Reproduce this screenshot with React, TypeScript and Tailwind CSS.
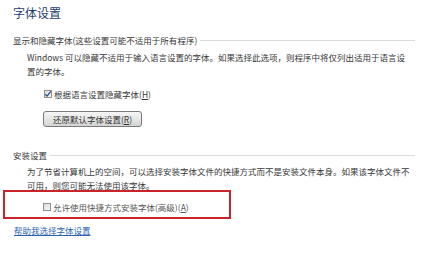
import type { ReactNode } from 'react'

const font = "font-['Noto_Sans_CJK_SC','Noto_Sans',sans-serif]"

export default function App() {
  return (
    <div className={`relative h-[255px] w-[436px] overflow-hidden bg-white pl-[13px] pt-[6px] text-[8.5px] text-[#383838] ${font}`}>
      <h1 className="text-[12px] leading-[14px] font-normal text-[#1e3c6e]">字体设置</h1>

      <SectionHeader className="mt-[14px]">显示和隐藏字体(这些设置可能不适用于所有程序)</SectionHeader>

      <p className="mt-[4px] ml-[14px] leading-[14px] whitespace-nowrap">
        Windows 可以隐藏不适用于输入语言设置的字体。如果选择此选项，则程序中将仅列出适用于语言设
        <br />
        置的字体。
      </p>

      <label className="mt-[10px] ml-[31px] flex h-[12px] items-center gap-[2px]">
        <Checkbox checked />
        <span>根据语言设置隐藏字体(<u>H</u>)</span>
      </label>

      <button className="mt-[11px] ml-[30px] flex h-[16px] w-[99px] items-center justify-center rounded-[3px] border border-[#7a7a7a] bg-gradient-to-b from-[#f6f6f6] via-[#e6e6e6] to-[#d4d4d4] leading-none text-[#333]">
        还原默认字体设置(<u>R</u>)
      </button>

      <SectionHeader className="mt-[22px]">安装设置</SectionHeader>

      <p className="mt-[4px] ml-[14px] leading-[13.5px] whitespace-nowrap">
        为了节省计算机上的空间，可以选择安装字体文件的快捷方式而不是安装文件本身。如果该字体文件不
        <br />
        可用，则您可能无法使用该字体。
      </p>

      {/* red annotation frame */}
      <div className="mt-[-2px] ml-[-10px] h-[29px] w-[228px] border-2 border-[#c9232b] pt-[9px] pl-[38px]">
        <label className="flex h-[12px] items-center gap-[2px] text-[#555]">
          <Checkbox />
          <span>允许使用快捷方式安装字体(高级)(<u>A</u>)</span>
        </label>
      </div>

      <a href="#" className="mt-[5px] ml-[1px] block w-fit leading-[12px] text-[#2a64b4] underline">
        帮助我选择字体设置
      </a>
    </div>
  )
}

function SectionHeader({ children, className }: { children: ReactNode; className?: string }) {
  return (
    <div className={`flex h-[12px] items-center pr-[21px] ${className ?? ''}`}>
      <span className="whitespace-nowrap">{children}</span>
      <span className="ml-[3px] h-px flex-1 bg-[#dadada]" />
    </div>
  )
}

function Checkbox({ checked }: { checked?: boolean }) {
  return (
    <span className="relative flex h-[8px] w-[8px] shrink-0 items-center justify-center border border-[#8e8f8f] bg-gradient-to-br from-[#dcdcdc] to-[#f7f7f7]">
      {checked && (
        <svg viewBox="0 0 8 8" className="absolute h-[8px] w-[8px]">
          <path d="M1.3 4.2 L3.1 6.1 L6.8 1.4" fill="none" stroke="#2b4a8a" strokeWidth="1.3" />
        </svg>
      )}
    </span>
  )
}
